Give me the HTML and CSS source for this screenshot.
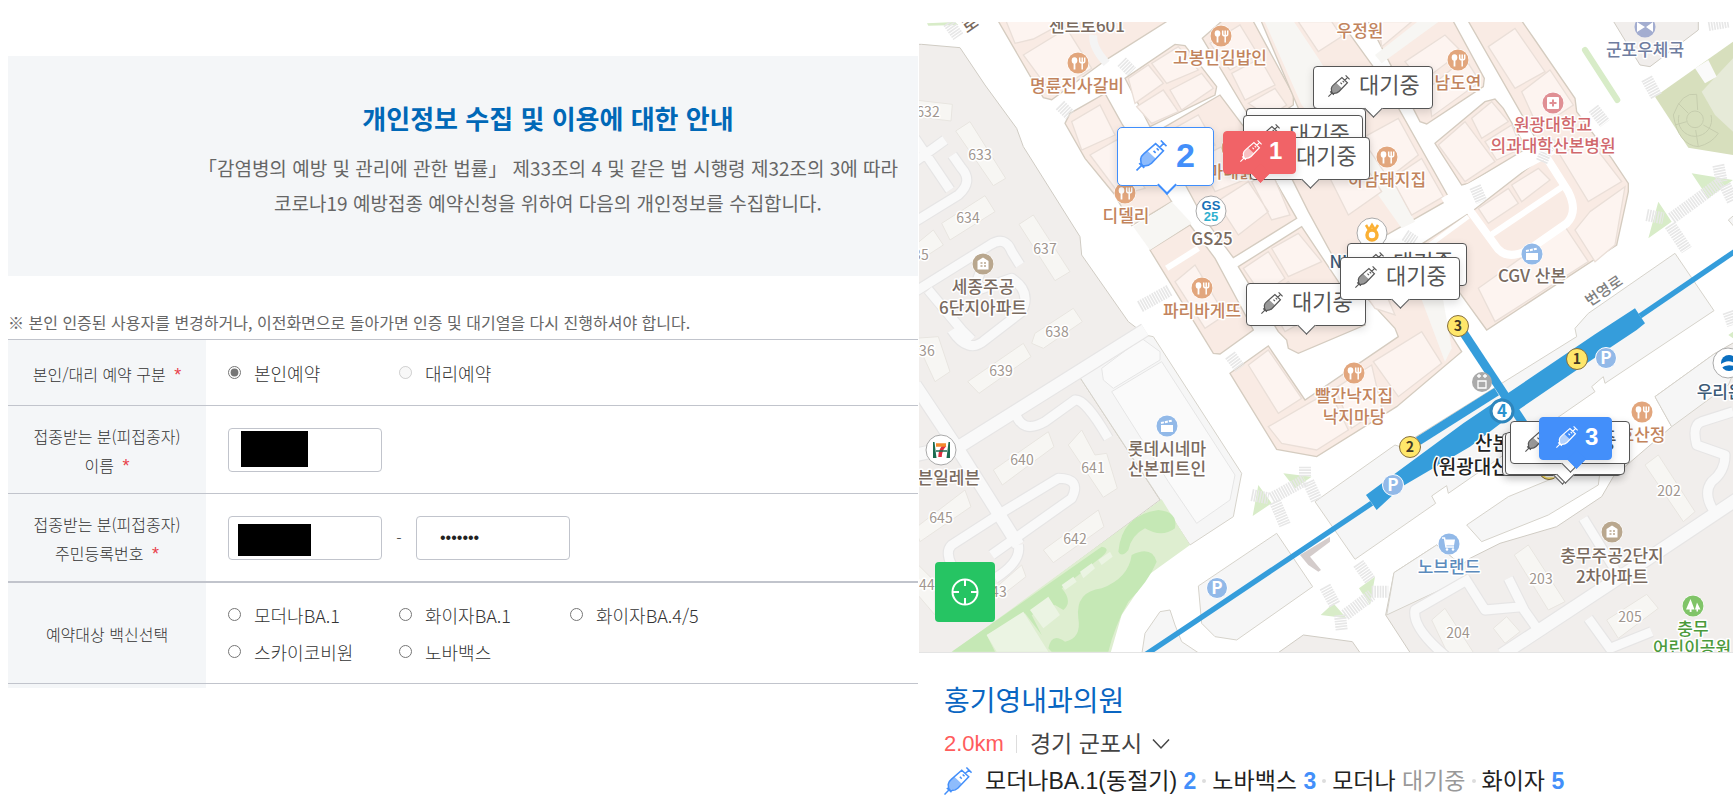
FILE: index.html
```html
<!DOCTYPE html>
<html lang="ko">
<head>
<meta charset="utf-8">
<title>예방접종 예약</title>
<link rel="stylesheet" href="styles.css">
</head>
<body>
<svg class="defs" aria-hidden="true">
  <symbol id="syringe" viewBox="0 0 30 30">
    <path class="liquid" d="M5 23 L4.500 18.500 Q5 15.500 7.500 13.500 L11 10.500 L19 18 L15 22 Q12 25 8 24.500 Z"/>
    <path d="M0.500 29.500 L5 25 M3 22.500 L8 27 M5 23 L4.500 18.500 Q5 15.500 7.500 13.500 L19 3.500 L26.500 10.500 L15 22.500 Q12 25.500 7 25 Z M20 8 l2 2 M17 10.500 l2 2 M23 7 L26.500 3.500 M24 0.500 L29.500 6" fill="none" stroke="currentColor" stroke-width="1.600"/>
  </symbol>
  <symbol id="food" viewBox="-12 -12 24 24">
    <circle r="11" fill="#fff"/><circle r="10.500" fill="#e2a67d"/>
    <ellipse cx="-3.500" cy="-2.500" rx="2.800" ry="3.300" fill="#fff"/><path d="M-3.500 0 V6.500" stroke="#fff" stroke-width="1.800"/>
    <path d="M1.700 -5.500 V-2 Q1.700 0 4.200 0 Q6.700 0 6.700 -2 V-5.500 M4.200 -5.500 V6.500" fill="none" stroke="#fff" stroke-width="1.500"/>
  </symbol>
  <symbol id="house" viewBox="-12 -12 24 24">
    <circle r="11" fill="#fff"/><circle r="10.500" fill="#b9a78e"/>
    <path d="M-5.500 5.500 V-3 L0 -6.500 L5.500 -3 V5.500 Z" fill="#fff"/><path d="M-2.500 -1 h2 M1 -1 h2 M-2.500 2 h2 M1 2 h2" stroke="#b9a78e" stroke-width="1.500"/>
  </symbol>
  <symbol id="film" viewBox="-12 -12 24 24">
    <circle r="11" fill="#fff"/><circle r="10.500" fill="#92b9e8"/>
    <path d="M-6 -1 H6 V6 H-6 Z" fill="#fff"/><path d="M-6 -3 L5.500 -5.500" stroke="#fff" stroke-width="2" stroke-dasharray="3 1"/>
  </symbol>
  <symbol id="cart" viewBox="-12 -12 24 24">
    <circle r="11" fill="#fff"/><circle r="10.500" fill="#92b9e8"/>
    <path d="M-7 -6 H-4.500 L-3 3 H5" fill="none" stroke="#fff" stroke-width="1.500"/><path d="M-4 -4.500 H6 L5 1.500 H-3 Z" fill="#fff"/><circle cx="-2" cy="5.500" r="1.300" fill="#fff"/><circle cx="4" cy="5.500" r="1.300" fill="#fff"/>
  </symbol>
  <symbol id="park" viewBox="-12 -12 24 24">
    <circle r="11" fill="#fff"/><circle r="10.500" fill="#80c468"/>
    <path d="M-2.500 -7 L1.500 3.500 H-7 Z M4 -3.500 L7.500 3.500 H2 Z M-3.300 3 h1.800 v3 h-1.800 Z M3.500 3 h1.500 v2.500 h-1.500 Z" fill="#fff"/>
  </symbol>
  <symbol id="hospital" viewBox="-12 -12 24 24">
    <circle r="11" fill="#fff"/><circle r="10.500" fill="#e08f94"/>
    <rect x="-6" y="-6" width="12" height="12" rx="1" fill="#fff"/><path d="M-3.500 0 H3.500 M0 -3.500 V3.500" stroke="#e08f94" stroke-width="2"/>
  </symbol>
</svg>

<main class="page">
  <section class="booking">
    <header class="notice">
      <h1 class="notice-title">개인정보 수집 및 이용에 대한 안내</h1>
      <p class="notice-text">「감염병의 예방 및 관리에 관한 법률」 제33조의 4 및 같은 법 시행령 제32조의 3에 따라<br>코로나19 예방접종 예약신청을 위하여 다음의 개인정보를 수집합니다.</p>
    </header>
    <p class="caution">※ 본인 인증된 사용자를 변경하거나, 이전화면으로 돌아가면 인증 및 대기열을 다시 진행하셔야 합니다.</p>
    <form class="form">
      <div class="row">
        <div class="head"><span>본인/대리 예약 구분 <em>*</em></span></div>
        <div class="choices">
          <label class="choice"><input type="radio" name="who" checked>본인예약</label>
          <label class="choice"><input type="radio" name="who" disabled>대리예약</label>
        </div>
      </div>
      <div class="row">
        <label class="head" for="name"><span>접종받는 분(피접종자)<br>이름 <em>*</em></span></label>
        <div class="fields">
          <span class="field"><input id="name" type="text"><span class="mask mask-name"></span></span>
        </div>
      </div>
      <div class="row">
        <label class="head" for="rrn"><span>접종받는 분(피접종자)<br>주민등록번호 <em>*</em></span></label>
        <div class="fields">
          <span class="field"><input id="rrn" type="text"><span class="mask mask-rrn"></span></span>
          <span class="dash">-</span>
          <span class="field"><input type="password" value="0000000" aria-label="주민등록번호 뒷자리"></span>
        </div>
      </div>
      <div class="row row-vaccine">
        <div class="head"><span>예약대상 백신선택</span></div>
        <div class="choices">
          <label class="choice"><input type="radio" name="vaccine">모더나BA.1</label>
          <label class="choice"><input type="radio" name="vaccine">화이자BA.1</label>
          <label class="choice"><input type="radio" name="vaccine">화이자BA.4/5</label>
          <label class="choice"><input type="radio" name="vaccine">스카이코비원</label>
          <label class="choice"><input type="radio" name="vaccine">노바백스</label>
        </div>
      </div>
      <div class="row-end"></div>
    </form>
  </section>

  <section class="finder">
    <div class="map">
      <svg class="map-canvas" viewBox="0 0 814 630" preserveAspectRatio="xMinYMin slice">
        <g transform="translate(-4 -7) scale(0.33333)">
          <g class="estate">
            <path d="M0 88 H20 L135 98 L210 210 L305 340 L325 395 L495 665 L500 720 L640 920 L690 958 L490 1080 L735 1455 L110 1920 H0 Z"/>
            <path d="M1490 1920 L1412 1800 L1437 1673 L1565 1590 L1640 1650 L1665 1630 L1755 1585 L1925 1535 L2060 1445 L2095 1385 L2270 1235 L2220 1145 L2400 1015 L2470 975 V1920 Z"/>
            <path d="M1080 1920 L1165 1860 L1312 1880 L1340 1920 Z"/>
            <path d="M2090 10 H2350 V45 L2205 155 L2175 150 Z"/>
          </g>
          <g class="plain">
            <path d="M490 1080 L690 960 L715 965 L980 1375 L955 1505 L825 1590 Z"/>
            <path class="hall" d="M590 1130 L740 1040 L960 1380 L945 1455 L845 1525 L760 1400 Z"/>
            <path class="hall" d="M560 1060 L680 970 L735 1010 L735 1035 L595 1120 L565 1095 Z"/>
            <path d="M680 1920 L690 1855 L735 1790 L765 1785 L780 1830 L800 1880 L860 1920 Z"/>
            <path d="M850 1713 L1085 1555 L1193 1715 L965 1875 L900 1865 L860 1825 Z"/>
            <path d="M1200 1460 L1440 1290 L1455 1295 L1985 965 L1980 940 L2020 895 L2280 715 L2397 887 L2070 1105 L2065 1085 L2030 1115 L2040 1130 L1600 1435 L1595 1412 L1550 1443 L1562 1465 L1320 1633 Z"/>
            <path d="M2220 1145 L2400 1015 L2470 1040 L2440 1110 L2270 1235 Z"/>
            <path d="M1655 1530 L1780 1445 L2060 1330 L2050 1410 L1900 1500 L1700 1580 Z"/>
            <path d="M1437 1673 L1565 1590 L1640 1650 L1650 1690 L1415 1800 Z"/>
            <path d="M2440 615 L2470 590 V650 Z"/>
          </g>
          <g class="pink">
            <path d="M245 10 H770 L580 130 L410 254 L385 248 L355 200 Z"/>
            <path d="M450 325 L465 295 L570 235 L620 325 L770 560 L650 632 L600 540 L510 430 Z"/>
            <path d="M630 190 L780 88 L810 92 L905 215 L900 240 L705 335 Z"/>
            <path d="M862 70 L930 10 H1010 L1135 240 L1135 270 L1060 320 L1000 300 Z"/>
            <path d="M725 350 L915 240 L990 340 L1145 610 L955 728 L860 600 Z"/>
            <path d="M705 705 L825 630 L900 730 L1015 945 L915 1017 L895 1015 Z"/>
            <path d="M1035 10 H1270 L1400 190 L1600 545 L1590 560 L1265 745 L1180 590 L1105 440 L1150 280 Z"/>
            <path d="M1355 10 H1610 L1708 190 L1705 215 L1535 327 L1515 320 Z"/>
            <path d="M1560 385 L1710 260 L1740 252 L1765 280 L1835 400 L1660 505 L1640 510 Z"/>
            <path d="M1655 10 H1815 L1860 75 L1980 250 L1985 290 L2090 430 L2140 505 L2140 530 L2105 690 L1715 945 L1610 800 L1500 700 L1670 590 L1890 420 Z"/>
            <path d="M970 755 L1160 635 L1290 830 L1350 930 L1150 1015 L1120 1000 L1115 975 L1090 950 Z"/>
            <path d="M945 1075 L1060 993 L1170 1155 L1450 965 L1440 940 L1310 800 L1500 790 L1640 1010 L1445 1175 L1205 1325 L1085 1303 Z"/>
          </g>
          <g class="alley">
            <path d="M655 635 L770 560 L830 625 L705 705 Z"/>
            <path d="M1045 10 H1130 L1210 130 L1390 420 L1500 620 L1460 640 L1340 470 L1160 270 Z"/>
            <path d="M1380 120 L1520 10 H1585 L1400 145 Z"/>
            <path d="M1500 800 L1580 830 L1610 1000 L1590 1040 Z"/>
          </g>
          <g class="parcel">
            <path d="M270 10 H470 L355 72 L300 85 Z M325 120 L455 40 L530 160 L410 235 Z"/>
            <path d="M470 320 L555 270 L600 360 L500 405 Z M525 420 L605 375 L690 520 L615 540 Z"/>
            <path d="M640 190 L700 150 L745 205 L660 265 Z M710 145 L790 95 L850 165 L755 205 Z M665 275 L745 225 L790 290 L710 325 Z M765 225 L860 175 L895 220 L800 285 Z"/>
            <path d="M885 85 L975 30 L1030 120 L945 165 Z M950 175 L1035 130 L1080 210 L990 255 Z M1000 265 L1080 220 L1115 270 L1060 305 Z"/>
            <path d="M760 350 L850 300 L900 390 L810 440 Z M850 430 L940 385 L1000 490 L900 530 Z M905 560 L1000 500 L1060 590 L970 660 Z M1010 500 L1070 470 L1125 600 L1070 615 Z"/>
            <path d="M780 800 L840 750 L930 900 L870 940 Z"/>
            <path d="M1150 20 H1250 L1280 65 L1210 110 Z M1180 350 L1270 300 L1330 400 L1230 470 Z M1240 480 L1330 420 L1400 530 L1300 600 Z M1340 370 L1450 310 L1510 420 L1420 490 Z M1430 490 L1520 430 L1585 545 L1490 600 Z"/>
            <path d="M1390 20 H1490 L1400 95 Z M1470 140 L1590 60 L1640 110 L1520 200 Z M1540 220 L1650 130 L1695 200 L1550 305 Z"/>
            <path d="M1570 390 L1650 320 L1740 440 L1650 500 Z M1670 310 L1730 260 L1780 320 L1700 370 Z M1710 380 L1790 330 L1820 400 L1745 435 Z"/>
            <path d="M1720 95 L1800 40 L1890 170 L1800 220 Z M1820 230 L1905 165 L1975 270 L1870 340 Z M1935 420 L2020 370 L2120 500 L2020 560 Z M2025 590 L2130 515 L2100 690 L2040 740 L1980 645 Z M1690 820 L1950 635 L2020 740 L1740 920 Z"/>
            <path d="M1690 580 L1780 520 L1810 565 L1720 625 Z M1790 510 L1870 460 L1905 495 L1820 560 Z"/>
            <path d="M985 760 L1060 710 L1110 790 L1040 840 Z M1070 700 L1150 655 L1220 740 L1120 785 Z M1050 850 L1120 800 L1200 900 L1110 950 Z"/>
            <path d="M1000 1050 L1060 1005 L1160 1150 L1090 1195 Z M1060 1235 L1190 1160 L1245 1130 L1300 1245 L1205 1305 L1100 1285 Z M1260 1120 L1370 1050 L1400 1180 L1310 1240 Z M1375 1040 L1520 950 L1580 1045 L1450 1145 Z M1330 810 L1410 830 L1440 900 L1380 880 Z"/>
          </g>
          <g class="street">
            <path d="M1590 570 L1910 395" stroke-width="46"/>
            <path d="M1645 560 L1740 690 Q1770 740 1840 705 L1955 625 Q1990 590 1960 530 L1890 420"/>
            <path d="M1720 665 L1950 510" stroke-width="18"/>
            <path d="M1530 700 L1660 605" stroke-width="14"/>
            <path d="M755 760 L850 700" stroke-width="18"/>
            <path d="M535 60 Q530 95 575 145" class="street-soft"/>
          </g>
          <g class="garden">
            <path d="M740 1453 L825 1590 L700 1680 L620 1800 L585 1920 H100 Z"/>
            <path class="lawn" d="M110 1910 L560 1595 Q590 1600 560 1625 L440 1720 Q475 1760 445 1785 L420 1770 L350 1800 L380 1860 L330 1795 L215 1860 L240 1910 Z"/>
            <path class="lawn" d="M610 1610 Q620 1500 730 1485 Q790 1490 780 1540 Q740 1570 690 1540 Q650 1560 640 1605 Q620 1630 610 1610 Z"/>
            <path class="lawn" d="M400 1900 Q410 1850 450 1880 Q500 1870 490 1810 Q480 1730 560 1720 Q640 1690 650 1620 Q710 1590 725 1640 Q700 1700 640 1760 Q600 1830 580 1910 H410 Z"/>
            <path class="court" d="M215 1860 L325 1790 L400 1910 H245 Z M345 1785 L400 1745 L435 1800 L385 1840 Z M440 1710 L475 1685 L485 1700 L450 1725 Z M495 1670 L530 1645 L540 1660 L505 1690 Z M550 1635 L585 1610 L593 1625 L560 1650 Z"/>
            <path class="hill" d="M2220 245 L2454 80 V420 L2320 398 Z"/>
            <path class="hill-soft" d="M2360 230 L2454 130 V350 L2400 300 Z"/>
            <path class="pad" d="M2340 160 L2380 135 L2405 185 L2370 205 Z"/>
            <path class="rings" d="M2315 313 a25 25 0 1 0 50 0 a25 25 0 1 0 -50 0 M2292 300 a50 50 0 1 0 96 0 M2275 300 Q2300 230 2345 238 L2348 285 M2275 300 Q2290 390 2350 395 L2342 345 M2290 265 L2320 295 M2280 330 L2315 320 M2365 330 L2410 355 Q2390 385 2350 395"/>
            <path class="verge" d="M2010 105 L2107 255"/>
            <path class="leaf" d="M2330 475 L2454 495 L2380 550 Z M2230 560 L2270 620 L2200 670 Z M1105 1375 L1190 1385 L1140 1420 Z M1030 1410 L1070 1465 L1013 1503 Z M1380 1685 L1365 1770 L1332 1720 Z M1217 1800 L1255 1765 L1295 1810 Z M36 25 L120 21 L130 30 L40 32 Z M2440 960 L2454 950 V970 Z"/>
          </g>
          <path class="zebra" d="M100 22 L130 65 M620 140 L650 170 M435 270 L465 300 M675 875 L765 825 M2035 280 L2070 325 M2195 190 L2225 245 M2380 30 L2440 20 M1880 440 L1910 370 M1680 515 L1700 560 M2410 450 L2420 500 M2270 610 L2420 500 M2195 600 L2245 610 M2265 630 L2315 705 M2430 510 L2454 560 M2440 890 L2454 930 M945 1020 L975 1060 M1170 1355 L1170 1385 M1070 1450 L1170 1395 M1010 1440 L1060 1450 M1080 1460 L1110 1530 M1180 1400 L1205 1455 M1330 1645 L1365 1695 M1370 1730 L1420 1730 M1290 1800 L1370 1740 M1230 1715 L1260 1770 M1275 1800 L1280 1845 M1470 660 L1500 680"/>
          <path class="bridge" d="M1155 1620 L1245 1565 L1245 1580 L1185 1625 L1218 1665 L1210 1670 L1180 1650 Z"/>
          <g class="block">
            <path d="M0 255 L112 268 L108 318 L0 305 Z M122 348 L165 320 L272 490 L235 512 Z M80 625 L210 542 L240 590 L105 675 Z M0 690 L55 645 L85 690 L0 745 Z M312 628 L355 600 L465 770 L420 797 Z M360 955 L475 880 L502 920 L385 1000 L350 985 Z"/>
            <path d="M0 970 L70 965 L105 1070 L60 1100 Z M158 1100 L325 985 L348 1025 L192 1135 Z M235 1365 L400 1250 L417 1295 L262 1410 Z M460 1290 L500 1245 L540 1320 L575 1315 L607 1420 L565 1447 Z M0 1540 L150 1425 L168 1475 L15 1580 Z M385 1605 L550 1485 L567 1535 L415 1643 Z M0 1640 L60 1700 V1800 L0 1730 Z M240 1720 L320 1650 L333 1685 L250 1750 Z"/>
            <path d="M2190 1350 L2230 1320 L2340 1490 L2305 1520 Z M1798 1620 L1840 1590 L1950 1760 L1900 1785 Z M2075 1815 L2195 1738 L2230 1780 L2110 1870 Z M1550 1815 L1590 1780 L1680 1920 H1600 Z M1735 1840 L1775 1805 L1815 1850 L1770 1885 Z"/>
          </g>
          <defs>
            <path id="lanes" d="M0 620 L130 540 Q175 500 140 460 L112 420 M0 370 L105 525 M0 440 L90 375 M0 830 L225 690 Q270 660 290 710 L315 750 M40 825 L140 945 L170 975 M210 730 L175 830 L290 790 Q350 830 320 890 L210 975 Q160 1020 110 945 M300 1190 Q320 1260 390 1220 L480 1155 Q510 1150 580 1270 M265 1490 L430 1390 Q500 1390 470 1450 L230 1620 M265 1490 L110 1590 Q90 1610 110 1650 M310 1590 Q320 1640 240 1690 M2454 1190 L2360 1220 Q2330 1230 2345 1290 L2430 1320 Q2430 1370 2390 1400 Q2360 1440 2405 1500 M1650 1690 L1710 1785 L1820 1775 L1880 1860 M1780 1690 L1830 1790 M2020 1810 L2085 1900 L2210 1850 M1665 1690 L1500 1785 Q1490 1840 1600 1930 M2005 1510 L2110 1680"/>
            <path id="avenues" d="M0 1110 L140 1320 L310 1590 M140 1290 L690 945 M0 1320 L140 1290 M1760 1920 L2200 1630 L2470 1450"/>
          </defs>
          <use href="#lanes" class="lane-edge"/>
          <use href="#avenues" class="avenue-edge"/>
          <use href="#lanes" class="lane"/>
          <use href="#avenues" class="avenue"/>
          <g class="rail">
            <path d="M690 1920 L825 1830 L1370 1465" stroke-width="16"/>
            <path d="M2175 903 L2470 702" stroke-width="16"/>
            <path d="M1510 1278 L1745 1130" stroke-width="26"/>
            <path d="M1640 945 L1825 1225" stroke-width="26"/>
            <path class="platform" d="M1353 1440 L1645 1225 L2040 958 L2160 880 L2190 925 L2165 945 L2015 1045 L1810 1185 L1665 1295 L1460 1415 L1385 1485 Z"/>
          </g>
        </g>

        <g class="food-name">
          <use href="#food" x="147" y="29" width="24" height="24"/><text x="158" y="70">명륜진사갈비</text>
          <use href="#food" x="290" y="2" width="24" height="24"/><text x="301" y="42">고봉민김밥인</text>
          <text x="441" y="15">우정원</text>
          <use href="#food" x="527" y="26" width="24" height="24"/><text x="539" y="67">남도연</text>
          <use href="#food" x="301" y="114" width="24" height="24"/><text x="312" y="156">마네닭</text>
          <use href="#food" x="456" y="123" width="24" height="24"/><text x="468" y="164">하남돼지집</text>
          <use href="#food" x="194" y="159" width="24" height="24"/><text x="207" y="200">디델리</text>
          <use href="#food" x="271" y="254" width="24" height="24"/><text x="283" y="295">파리바게뜨</text>
          <use href="#food" x="423" y="339" width="24" height="24"/><text x="435" y="380">빨간낙지집</text><text x="435" y="401">낙지마당</text>
          <use href="#food" x="711" y="378" width="24" height="24"/><text x="723" y="419">호산정</text>
        </g>
        <g class="place-name">
          <text x="168" y="10">센트로601</text>
          <text x="52" y="8" transform="rotate(-35 52 4)">로</text>
          <use href="#house" x="52" y="230" width="24" height="24"/><text x="64" y="271">세종주공</text><text x="64" y="292">6단지아파트</text>
          <use href="#film" x="236" y="392" width="24" height="24"/><text x="248" y="433">롯데시네마</text><text x="248" y="453">산본피트인</text>
          <text x="22" y="462">세븐일레븐</text>
          <text x="293" y="223">GS25</text>
          <use href="#film" x="601" y="220" width="24" height="24"/><text x="613" y="260">CGV 산본</text>
          <use href="#house" x="681" y="498" width="24" height="24"/><text x="693" y="540">충무주공2단지</text><text x="693" y="561">2차아파트</text>
        </g>
        <g class="hospital-name">
          <use href="#hospital" x="622" y="69" width="24" height="24"/><text x="634" y="109">원광대학교</text><text x="634" y="130">의과대학산본병원</text>
        </g>
        <g class="office-name">
          <circle cx="726" cy="5" r="10.500" fill="#a3add0"/><path d="M718 0 L726 5 L718 10 Z M734 0 L727 5 L734 10 Z M720 0 h12" fill="#fff"/>
          <text x="726" y="34">군포우체국</text>
        </g>
        <g class="bank-name"><text x="423" y="246">NH</text><text x="809" y="376">우리은행</text></g>
        <g class="shop-name"><use href="#cart" x="518" y="510" width="24" height="24"/><text x="530" y="551">노브랜드</text></g>
        <g class="park-name"><use href="#park" x="762" y="572" width="24" height="24"/><text x="774" y="613">충무</text><text x="773" y="632">어린이공원</text></g>
        <g class="road-name"><text x="685" y="274" transform="rotate(-34 685 269)">번영로</text></g>
        <g class="lot">
          <text x="9" y="95">632</text><text x="61" y="138">633</text><text x="49" y="201">634</text><text x="-2" y="238">635</text><text x="126" y="232">637</text><text x="138" y="315">638</text><text x="4" y="334">636</text><text x="82" y="354">639</text><text x="103" y="443">640</text><text x="174" y="451">641</text><text x="22" y="501">645</text><text x="156" y="522">642</text><text x="4" y="568">644</text><text x="76" y="575">643</text><text x="750" y="474">202</text><text x="622" y="562">203</text><text x="539" y="616">204</text><text x="711" y="600">205</text>
        </g>

        <g>
          <circle class="brand" cx="22" cy="428" r="15"/><path d="M14 420 h17 v16 h-17 Z" fill="#1c6b50"/><path d="M15.500 420 h14 l-2 16 h-10 Z" fill="#fff"/><path d="M26 423 q-5 5 -5 12" fill="none" stroke="#e02f3f" stroke-width="3.500"/><path d="M17 423 h10" stroke="#f28a2e" stroke-width="3.500"/><path d="M17 429 h11" stroke="#1c6b50" stroke-width="1.500"/>
          <circle class="brand" cx="292" cy="189" r="15"/>
          <text class="gs gs-top" x="292" y="188">GS</text><text class="gs gs-low" x="292" y="199">25</text>
          <circle class="brand" cx="453" cy="211" r="15"/><circle cx="453" cy="213" r="5" fill="none" stroke="#fbb034" stroke-width="3.500"/><path d="M447 203 l3 5 l3 -5 l3 5 l3 -5" fill="none" stroke="#fbb034" stroke-width="2.500"/>
          <circle class="brand" cx="809" cy="341" r="15"/><circle cx="810" cy="341" r="8" fill="#0a6fc0"/><path d="M801 343 q8 -7 16 -1 v3 q-8 -4 -15 1 Z" fill="#fff"/>
          <circle cx="563" cy="360" r="10" fill="#aaa"/><path d="M559 359 h8 v7 h-8 Z M560 356 v-4 M566 356 v-4 M558 354 h4 M564 354 h4" fill="none" stroke="#fff" stroke-width="1.300"/>
          <g class="parking"><circle cx="474" cy="463" r="10.500"/><text x="474" y="469">P</text><circle cx="298" cy="566" r="10.500"/><text x="298" y="572">P</text><circle cx="687" cy="336" r="10.500"/><text x="687" y="342">P</text></g>
          <g class="exit"><circle cx="539" cy="304" r="10.500"/><text x="539" y="309">3</text><circle cx="658" cy="337" r="10.500"/><text x="658" y="342">1</text><circle cx="491" cy="425" r="10.500"/><text x="491" y="430">2</text><circle cx="630" cy="447" r="10.500"/></g>
          <circle class="line4" cx="583" cy="389" r="11"/><text class="line4-text" x="583" y="395">4</text>
          <g class="station"><text x="556" y="428">산본역</text><text x="513" y="452">(원광대산본병원)</text></g>
        </g>
      </svg>

      <button class="pin pin-wait" style="left:394px;top:44px"><svg><use href="#syringe"/></svg>대기중</button>
      <button class="pin pin-wait" style="left:327px;top:86px"><svg><use href="#syringe"/></svg>대기중</button>
      <button class="pin pin-wait" style="left:324px;top:93px"><svg><use href="#syringe"/></svg>대기중</button>
      <button class="pin pin-wait" style="left:331px;top:115px"><svg><use href="#syringe"/></svg>대기중</button>
      <button class="pin pin-few" style="left:304px;top:109px"><svg><use href="#syringe"/></svg>1</button>
      <button class="pin pin-current" style="left:198px;top:105px"><svg><use href="#syringe"/></svg>2</button>
      <button class="pin pin-wait" style="left:327px;top:261px"><svg><use href="#syringe"/></svg>대기중</button>
      <button class="pin pin-wait" style="left:428px;top:221px"><svg><use href="#syringe"/></svg>대기중</button>
      <button class="pin pin-wait" style="left:421px;top:235px"><svg><use href="#syringe"/></svg>대기중</button>
      <button class="pin pin-wait" style="left:583px;top:411px"><svg><use href="#syringe"/></svg>대기중</button>
      <button class="pin pin-wait" style="left:586px;top:410px"><svg><use href="#syringe"/></svg>대기중</button>
      <button class="pin pin-wait" style="left:591px;top:399px"><svg><use href="#syringe"/></svg>대기중</button>
      <button class="pin pin-many" style="left:620px;top:395px"><svg><use href="#syringe"/></svg>3</button>
      <button class="locate" aria-label="현재 위치">
        <svg viewBox="0 0 28 28" fill="none" stroke="#fff" stroke-width="2"><circle cx="14" cy="14" r="12.500"/><path d="M14 1 V8 M14 20 V27 M1 14 H8 M20 14 H27"/></svg>
      </button>
    </div>

    <article class="clinic">
      <h2 class="clinic-name"><a href="#clinic">홍기영내과의원</a></h2>
      <p class="clinic-place"><span class="distance">2.0km</span><span class="bar"></span><button class="area">경기 군포시<svg viewBox="0 0 18 12"><path d="M1 1.500 L9 10 L17 1.500" fill="none" stroke="currentColor" stroke-width="1.500"/></svg></button></p>
      <p class="stock"><svg class="stock-icon"><use href="#syringe"/></svg><span>모더나BA.1(동절기) <b>2</b></span><i></i><span>노바백스 <b>3</b></span><i></i><span>모더나 <span class="waiting">대기중</span></span><i></i><span>화이자 <b>5</b></span></p>
    </article>
  </section>
</main>
</body>
</html>
```
FILE: styles.css
```css
* { box-sizing: border-box; }
body {
  margin: 0;
  background: #fff;
  color: #333;
  font-family: "Liberation Sans", "Noto Sans CJK KR", sans-serif;
}
h1, h2, p { margin: 0; font-weight: 400; }
button { font-family: inherit; cursor: pointer; }
.defs { display: none; }

.page {
  display: grid;
  grid-template-columns: minmax(0, 910fr) minmax(0, 814fr);
  gap: 1px;
  padding: 0 3px 0 8px;
}

/* reservation form */
.booking {
  padding-top: 56px;
  overflow: hidden;
  font-family: "Noto Sans CJK KR", sans-serif;
  font-weight: 300;
}
.notice {
  padding: 40px 0 56px 170px;
  background: #f4f6f8;
  text-align: center;
  white-space: nowrap;
}
.notice-title { color: #0068b7; font-size: 26px; line-height: 44px; font-weight: 700; }
.notice-text { margin-top: 10px; color: #666; font-size: 19px; line-height: 35px; }
.caution { margin-top: 32px; padding-bottom: 2px; color: #666; font-size: 16px; line-height: 29px; white-space: nowrap; }
.row {
  display: grid;
  grid-template-columns: 198px minmax(0, 1fr);
  border-top: 1px solid #c1c4cc;
  min-height: 66px;
}
.row-vaccine { border-top-width: 2px; }
.row-end { height: 5px; border-top: 1px solid #c1c4cc; background: linear-gradient(#f4f6f8, #f4f6f8) 0 0 / 198px 100% no-repeat; }
.head {
  display: flex;
  align-items: center;
  justify-content: center;
  padding: 16px 0 13px;
  background: #f4f6f8;
  font-size: 16px;
  line-height: 29px;
  text-align: center;
}
.head em { margin-left: 4px; color: #e8404a; font-family: "Liberation Sans", sans-serif; font-size: 18px; font-style: normal; line-height: 1; }
.choices {
  display: grid;
  grid-template-columns: repeat(3, 171px);
  grid-auto-rows: 37px;
  align-content: center;
  padding-left: 22px;
}
.choice { display: flex; align-items: center; font-size: 18px; white-space: nowrap; }
.choice input { width: 13px; height: 13px; margin: 0 13px 0 0; accent-color: #767676; filter: grayscale(1); }
.row-vaccine .choices { padding-top: 13px; padding-bottom: 13px; }
.fields { display: flex; align-items: center; padding-left: 22px; }
.field { position: relative; display: block; width: 154px; }
.field input {
  display: block;
  width: 100%;
  height: 44px;
  padding: 0 23px;
  border: 1px solid #c1c4cc;
  border-radius: 4px;
  color: #222;
  font-family: "Liberation Sans", sans-serif;
  font-size: 16px;
}
.dash { width: 34px; text-align: center; }
.mask { position: absolute; background: #000; }
.mask-name { left: 13px; top: 3px; width: 67px; height: 36px; }
.mask-rrn { left: 10px; top: 8px; width: 73px; height: 32px; }

/* map */
.finder { padding-top: 22px; }
.map { position: relative; height: 631px; overflow: hidden; background: #fff; border-bottom: 1px solid #e4e4e4; }
.map-canvas { display: block; width: 100%; height: 100%; }
.map-canvas text {
  font-family: "Noto Sans CJK KR", sans-serif;
  font-size: 17px;
  font-weight: 500;
  text-anchor: middle;
  paint-order: stroke;
  stroke: #fff;
  stroke-width: 3px;
  stroke-linejoin: round;
}
.estate { fill: #f1eeec; stroke: #d0ccc4; stroke-width: 3; }
.plain { fill: #f6f6f6; stroke: #d6d3cb; stroke-width: 3; }
.hall { fill: #fafafa; stroke: #e6e6e6; }
.pink { fill: #f9ebe4; stroke: #d5ccc0; stroke-width: 4; }
.alley { fill: #f7f6f3; }
.parcel { fill: #fdf4f0; stroke: #eadfd8; stroke-width: 4; }
.street { fill: none; stroke: #fff; stroke-width: 24; }
.street-soft { stroke: #f4f4f4; }
.garden { fill: #deeed0; }
.lawn { fill: #c5e8b5; }
.court { fill: #ebf4e3; }
.hill { fill: #d7dfbd; }
.hill-soft { fill: #e6ead8; }
.pad { fill: #fafafa; }
.rings { fill: none; stroke: #c6cdae; stroke-width: 3; }
.verge { stroke: #d8ecc8; stroke-width: 18; stroke-linecap: round; }
.leaf { fill: #d8ecc8; }
.zebra { fill: none; stroke: #e7e7e7; stroke-width: 36; stroke-dasharray: 5 3; }
.bridge { fill: #d4cccb; }
.block { fill: #f7f6f3; stroke: #e8e5e0; stroke-width: 3; }
.lane-edge, .lane, .avenue-edge, .avenue { fill: none; stroke-linejoin: round; }
.lane-edge, .avenue-edge { stroke: #e6e5e5; }
.lane, .avenue { stroke: #f9f9f9; }
.lane-edge { stroke-width: 34; }
.lane { stroke-width: 27; }
.avenue-edge { stroke-width: 44; }
.avenue { stroke-width: 37; }
.rail { fill: none; stroke: #359ddb; }
.rail .platform { fill: #359ddb; stroke: none; }
.food-name { fill: #c2845d; }
.place-name { fill: #7a6b5f; }
.hospital-name { fill: #d0686c; }
.office-name { fill: #6f7da0; }
.bank-name { fill: #3c5a76; }
.shop-name { fill: #5c8bbd; }
.park-name { fill: #4b9a3b; }
.map-canvas .road-name text { fill: #808080; font-size: 15px; }
.map-canvas .lot text { fill: #a0968f; font-size: 14px; font-weight: 400; }
.map-canvas .station text { fill: #222; font-size: 19px; text-anchor: start; }
.brand { fill: #fff; stroke: #aaa; }
.map-canvas .gs { font-family: "Liberation Sans", sans-serif; font-size: 13px; font-weight: 700; stroke: none; }
.gs-top { fill: #1671b8; }
.gs-low { fill: #2fb0cf; }
.parking { fill: #92b9e8; }
.parking circle { stroke: #fff; }
.map-canvas .parking text { fill: #fff; stroke: none; font-weight: 700; }
.exit { fill: #ffe76a; }
.exit circle { stroke: #866f3d; }
.map-canvas .exit text { fill: #443a25; stroke: none; font-size: 14px; font-weight: 700; }
.line4 { fill: #fff; stroke: #2e86bd; stroke-width: 3; }
.map-canvas .line4-text { fill: #2a93cf; stroke: none; font-weight: 700; }

.pin {
  position: absolute;
  display: flex;
  align-items: center;
  width: 120px;
  height: 43px;
  padding: 0 14px;
  gap: 9px;
  border: 1px solid #555;
  border-radius: 4px;
  background: #fff;
  box-shadow: 0 3px 8px rgba(0, 0, 0, 0.14);
  color: #555;
  font-size: 22px;
  line-height: 30px;
  white-space: nowrap;
}
.pin::after {
  content: "";
  position: absolute;
  left: calc(50% - 6px);
  bottom: -7px;
  width: 12px;
  height: 12px;
  border: solid;
  border-color: inherit;
  border-width: 0 1px 1px 0;
  background: inherit;
  transform: rotate(45deg);
}
.pin svg { flex: none; width: 22px; height: 24px; }
.pin-wait { padding-bottom: 3px; }
.liquid { fill: currentColor; fill-opacity: 0.6; }
.pin-few, .pin-many { width: 73px; padding: 0 16px 3px; gap: 7px; color: #fff; font-size: 24px; font-weight: 700; }
.pin-few { background: #f16367; border-color: #f16367; }
.pin-many { background: #438ffa; border-color: #438ffa; }
.pin-current {
  width: 97px;
  height: 59px;
  padding: 0 18px 3px;
  border: 1px solid #3f8efc;
  border-radius: 5px;
  color: #438ffa;
  font-size: 34px;
  font-weight: 700;
}
.pin-current::after { border-width: 0 2px 2px 0; }
.pin-current svg { width: 31px; height: 31px; }
.locate {
  position: absolute;
  left: 16px;
  bottom: 30px;
  display: grid;
  place-items: center;
  width: 60px;
  height: 60px;
  border: 0;
  border-radius: 4px;
  background: #26c463;
}
.locate svg { width: 28px; height: 28px; }

/* clinic summary */
.clinic { padding: 27px 0 0 25px; white-space: nowrap; }
.clinic-name { font-size: 28px; line-height: 44px; }
.clinic-name a { color: #0a66c2; text-decoration: none; }
.clinic-place { display: flex; align-items: center; height: 40px; }
.distance { color: #ff5c5c; font-size: 22px; }
.bar { width: 1px; height: 18px; margin: 0 13px 0 12px; background: #ddd; }
.area { display: flex; align-items: center; gap: 10px; padding: 0; border: 0; background: none; color: #444; font-size: 23px; line-height: 36px; }
.area svg { width: 18px; height: 12px; }
.stock { display: flex; align-items: center; color: #222; font-size: 23px; line-height: 34px; }
.stock-icon { width: 28px; height: 28px; margin-right: 13px; color: #438ffa; }
.stock b { color: #438ffa; }
.stock i { width: 4px; height: 4px; margin: 0 6px; border-radius: 50%; background: #ddd; }
.waiting { color: #999; }
```
